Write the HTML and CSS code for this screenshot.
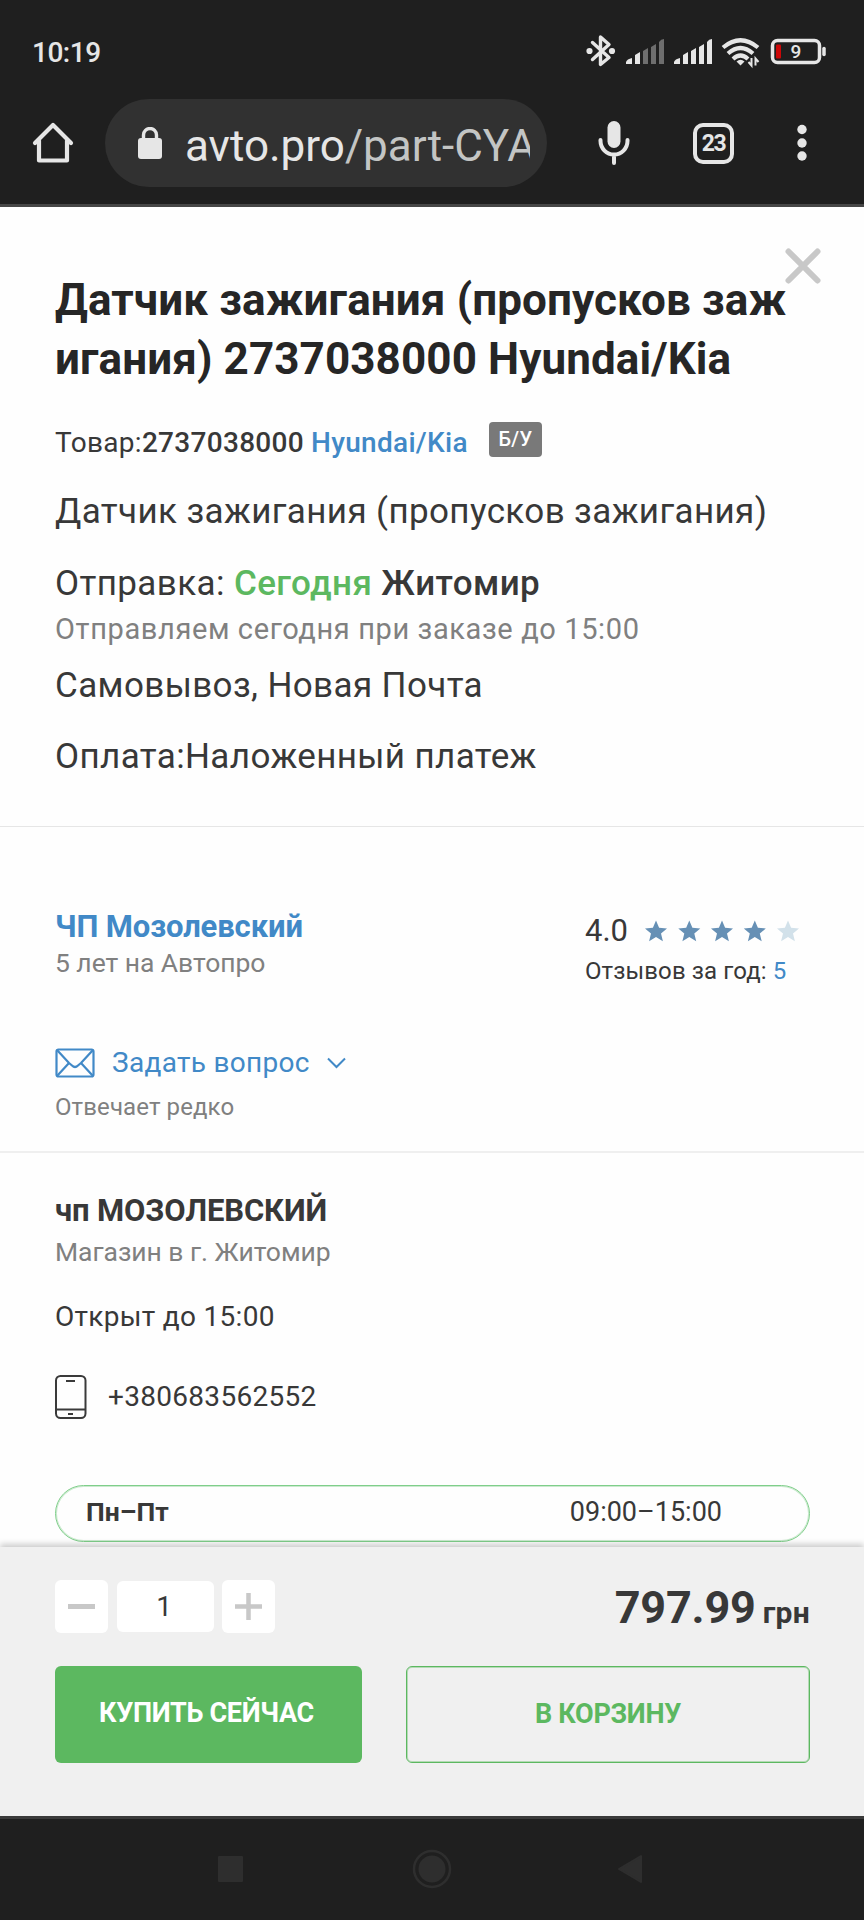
FILE: index.html
```html
<!DOCTYPE html>
<html lang="ru">
<head>
<meta charset="utf-8">
<title>Датчик зажигания 2737038000 Hyundai/Kia</title>
<link rel="stylesheet" href="styles.css">
</head>
<body>
<div class="screen">
  <header class="chrome">
    <div class="status">
      <span class="clock">10:19</span>
      <svg class="status-icons" viewBox="0 0 262 40" width="262" height="40">
        <g fill="none" stroke="#e6e6e6" stroke-width="3.400" stroke-linejoin="round" stroke-linecap="round">
          <path d="M10.500 12.500L27 27.500L18.500 34.500V7L27 14.500L10.500 29.500"/>
        </g>
        <g fill="#e6e6e6">
          <circle cx="7.500" cy="21" r="3.100"/><circle cx="30" cy="21" r="3.100"/>
          <path d="M44 34v-2q1-3 6-4v6zM53 34v-9l5-3v12z"/>
          <path d="M92 34v-2q1-3 6-4v6zM101 34v-9l5-3v12zM109 34v-13l5-3v16zM117 34v-17l5-3v20zM125 34v-22q2-3 5-3v25z"/>
        </g>
        <path fill="#6e6e6e" d="M61 34v-13l5-3v16zM69 34v-17l5-3v20zM77 34v-22q2-3 5-3v25z"/>
        <g fill="none" stroke="#e6e6e6" stroke-width="4.200">
          <path d="M141 17.500Q158.500 3 176 17.500"/>
          <path d="M146 23.500Q158.500 12.500 171 23.500"/>
          <path d="M151 29Q158.500 22 166 29"/>
        </g>
        <path fill="#e6e6e6" d="M154.500 31.500q4-3.500 8 0l-4 4z"/>
        <path fill="none" stroke="#e6e6e6" stroke-width="2" d="M169.500 28v7.500l-3-3.500M173.500 35.500v-7l3 3.500"/>
        <rect x="190.500" y="10.500" width="47" height="22" rx="5" fill="none" stroke="#e6e6e6" stroke-width="3.500"/>
        <rect x="194" y="14.500" width="5" height="14" rx="1" fill="#cc0808"/>
        <path d="M242 18.500v6" stroke="#e6e6e6" stroke-width="3.500" stroke-linecap="round"/>
        <text class="battery-text" x="214" y="28" text-anchor="middle">9</text>
      </svg>
    </div>
    <div class="toolbar">
      <svg class="home" viewBox="0 0 42 42" width="42" height="42" fill="none" stroke="#e6e6e6" stroke-width="4.200" stroke-linejoin="round" stroke-linecap="round">
        <path d="M3 21L21 3L39 21M7 18.500V38.500H35V18.500"/>
      </svg>
      <div class="omnibox">
        <svg viewBox="0 0 26 33" width="26" height="33">
          <rect x="1" y="11" width="24" height="21" rx="3" fill="#e6e6e6"/>
          <path d="M6.500 12V8a6.500 6.500 0 0 1 13 0V12" fill="none" stroke="#e6e6e6" stroke-width="3.400"/>
        </svg>
        <div class="url">avto.pro<span class="path">/part-CYA</span></div>
      </div>
      <svg class="mic" viewBox="0 0 32 46" width="32" height="46">
        <rect x="9.500" y="1" width="13" height="27" rx="6.500" fill="#e6e6e6"/>
        <path d="M2.500 20v1a13.500 13.500 0 0 0 27 0v-1M16 35v8" fill="none" stroke="#e6e6e6" stroke-width="4" stroke-linecap="round"/>
      </svg>
      <div class="tabs">23</div>
      <svg class="menu" viewBox="0 0 10 38" width="10" height="38" fill="#e6e6e6">
        <circle cx="5" cy="5.500" r="4.700"/><circle cx="5" cy="19" r="4.700"/><circle cx="5" cy="32" r="4.700"/>
      </svg>
    </div>
  </header>

  <main class="page">
    <section class="product">
      <svg class="close" viewBox="0 0 36 36" width="36" height="36" stroke="#c8c8c8" stroke-width="6" stroke-linecap="round">
        <path d="M3.500 3.500L32.500 32.500M32.500 3.500L3.500 32.500"/>
      </svg>
      <h1 class="title">Датчик зажигания (пропусков заж<br><span class="title-rest">игания) 2737038000 Hyundai/Kia</span></h1>
      <div class="sku">Товар:<b>2737038000</b> <b class="link">Hyundai/Kia</b><span class="badge">Б/У</span></div>
      <p class="line desc">Датчик зажигания (пропусков зажигания)</p>
      <p class="line ship">Отправка: <b class="today">Сегодня</b> <b>Житомир</b></p>
      <p class="note">Отправляем сегодня при заказе до 15:00</p>
      <p class="line delivery">Самовывоз, Новая Почта</p>
      <p class="line pay">Оплата:Наложенный платеж</p>
    </section>

    <section class="seller">
      <div class="seller-row">
        <div>
          <div class="name link">ЧП Мозолевский</div>
          <div class="sub">5 лет на Автопро</div>
        </div>
        <div class="rating">
          <div class="score">
            <span>4.0</span>
            <svg viewBox="0 0 156 22" width="156" height="22" fill="#6690b5">
              <defs><path id="star" d="M11 .500L14.100 7.800L22 8.400L16 13.500L17.900 21.300L11 17.100L4.100 21.300L6 13.500L0 8.400L7.900 7.800Z"/></defs>
              <use href="#star"/><use href="#star" x="33.300"/><use href="#star" x="66"/><use href="#star" x="98.800"/><use href="#star" x="132" fill="#d2e1ea"/>
            </svg>
          </div>
          <div class="reviews">Отзывов за год: <span class="link">5</span></div>
        </div>
      </div>
      <div class="ask link">
        <svg class="mail" viewBox="0 0 40 30" width="40" height="30" fill="none" stroke="#4189c7" stroke-width="2.200">
          <rect x="1.500" y="1.500" width="37" height="27" rx="2"/>
          <path d="M2 2L14 15L17 17.500Q20 20.500 23 17.500L26 15L38 2M2 28L14 15M38 28L26 15"/>
        </svg>
        <span>Задать вопрос</span>
        <svg class="chevron" viewBox="0 0 19 12" width="19" height="12" fill="none" stroke="#4189c7" stroke-width="2"><path d="M1 1.500L9.500 10L18 1.500"/></svg>
      </div>
      <div class="answers">Отвечает редко</div>
    </section>

    <section class="store">
      <div class="name">чп МОЗОЛЕВСКИЙ</div>
      <div class="sub place">Магазин в г. Житомир</div>
      <div class="open">Открыт до 15:00</div>
      <div class="phone">
        <svg viewBox="0 0 32 44" width="32" height="44" fill="none" stroke="#3a3a3a" stroke-width="2">
          <rect x="1" y="1" width="29.500" height="42" rx="4.500"/>
          <path d="M1 34.500H30.500M11 6h9M13 39h5"/>
        </svg>
        <span>+380683562552</span>
      </div>
      <div class="hours"><b>Пн–Пт</b><span>09:00–15:00</span></div>
    </section>
  </main>

  <footer class="buy-bar">
    <div class="buy-top">
      <div class="qty">
        <div class="step"><svg viewBox="0 0 27 27" width="27" height="27" stroke="#c8c8c8" stroke-width="5"><path d="M0 13.500H27"/></svg></div>
        <div class="count">1</div>
        <div class="step"><svg viewBox="0 0 27 27" width="27" height="27" stroke="#c8c8c8" stroke-width="4.500"><path d="M0 13.500H27M13.500 0V27"/></svg></div>
      </div>
      <div class="price">797.99<span class="cur">грн</span></div>
    </div>
    <div class="buttons">
      <div class="btn primary">КУПИТЬ СЕЙЧАС</div>
      <div class="btn outline">В КОРЗИНУ</div>
    </div>
  </footer>

  <nav class="sysnav">
    <span class="square"></span>
    <svg class="circle" viewBox="0 0 40 40" width="40" height="40"><circle cx="20" cy="20" r="13.500" fill="#2e2e2e"/><circle cx="20" cy="20" r="18" fill="none" stroke="#2e2e2e" stroke-width="2.500"/></svg>
    <svg class="back" viewBox="0 0 26 30" width="26" height="30"><path d="M2 15L24 2V28Z" fill="#2e2e2e" stroke="#2e2e2e" stroke-width="2" stroke-linejoin="round"/></svg>
  </nav>
</div>
</body>
</html>
```
FILE: styles.css
```css
* { box-sizing: border-box; }
body { margin: 0; background: #fefefe; }
h1, p { margin: 0; }
svg { display: block; flex: none; }
b { font-weight: 500; }

.screen {
  width: 864px;
  height: 1920px;
  display: flex;
  flex-direction: column;
  overflow: hidden;
  font-family: Roboto, "Noto Sans", sans-serif;
  color: #383838;
}

/* Browser chrome */
.chrome {
  flex: none;
  height: 207px;
  background: #1f1f1f;
  border-bottom: 3px solid #464646;
  color: #e6e6e6;
}
.status {
  height: 99px;
  padding: 30px 32px 0 32px;
  display: flex;
  justify-content: space-between;
  align-items: flex-start;
}
.clock { padding-top: 1px; font-size: 28px; line-height: 44px; font-weight: 500; letter-spacing: -.5px; }
.status-icons { margin-right: -12px; }
.battery-text { font: 500 19px Roboto, sans-serif; fill: #e6e6e6; }
.toolbar { display: flex; align-items: center; height: 88px; padding-left: 32px; }
.omnibox {
  display: flex;
  align-items: center;
  width: 442px;
  height: 88px;
  margin-left: 31px;
  padding-left: 32px;
  border-radius: 44px;
  background: #313131;
}
.url {
  width: 345px;
  margin-left: 22px;
  padding: 5px 0 0;
  overflow: hidden;
  white-space: nowrap;
  font-size: 44px;
  line-height: 56px;
}
.path { color: #c3c5c4; }
.mic { margin-left: 51px; }
.tabs {
  width: 41px;
  height: 41px;
  margin-left: 63px;
  border: 4px solid #e6e6e6;
  border-radius: 10px;
  font-size: 23px;
  font-weight: 700;
  line-height: 33px;
  text-align: center;
  letter-spacing: -1.5px;
}
.menu { margin-left: 63px; }

/* Page */
.page { flex: none; height: 1340px; background: #fefefe; }
.link { color: #4189c7; }

.product {
  position: relative;
  height: 620px;
  padding: 64px 0 0 55px;
  border-bottom: 1px solid #e6e6e6;
}
.close { position: absolute; left: 785px; top: 41px; }
.title { font-size: 44px; line-height: 59px; font-weight: 700; color: #262626; white-space: nowrap; letter-spacing: .12px; }
.title-rest { letter-spacing: .1px; }
.sku {
  display: flex;
  align-items: center;
  height: 36px;
  margin-top: 36px;
  font-size: 28px;
  line-height: 36px;
  letter-spacing: .3px;
}
.sku .link { margin-left: 7px; }
.badge {
  width: 53px;
  height: 35px;
  margin: -8px 0 0 21px;
  border-radius: 4px;
  background: #797979;
  color: #fff;
  font-size: 20px;
  font-weight: 500;
  line-height: 34px;
  text-align: center;
}
.line { font-size: 35px; line-height: 40px; letter-spacing: .38px; }
.desc { margin-top: 31px; }
.ship { margin-top: 32px; letter-spacing: .4px; }
.today { color: #5cb860; }
.note { margin-top: 8px; font-size: 29px; line-height: 34px; letter-spacing: .62px; color: #808080; }
.delivery { margin-top: 20px; }
.pay { margin-top: 31px; }

.seller {
  height: 326px;
  padding: 82px 0 0 55px;
  border-bottom: 2px solid #efefef;
}
.seller-row { display: flex; justify-content: space-between; height: 136px; }
.name { font-size: 31px; line-height: 36px; font-weight: 700; letter-spacing: -.12px; }
.sub { margin-top: 2px; font-size: 26.500px; line-height: 32px; letter-spacing: -.05px; color: #808080; }
.rating { width: 280px; padding: 4px 0 0 1px; }
.score { display: flex; align-items: center; gap: 17px; font-size: 31px; line-height: 36px; }
.reviews { margin-top: 8px; font-size: 24px; line-height: 28px; letter-spacing: .1px; }
.ask { display: flex; align-items: center; font-size: 28px; line-height: 36px; letter-spacing: .3px; }
.mail { margin-right: 17px; }
.chevron { margin-left: 17px; }
.answers { margin-top: 12px; font-size: 24px; line-height: 28px; letter-spacing: .1px; color: #808080; }

.store { padding: 40px 54px 0 55px; }
.place { margin-top: 7px; }
.open { margin-top: 31px; font-size: 28px; line-height: 36px; letter-spacing: .3px; }
.phone {
  display: flex;
  align-items: center;
  gap: 21px;
  margin-top: 40px;
  font-size: 28px;
  line-height: 44px;
  letter-spacing: .3px;
}
.hours {
  display: flex;
  align-items: center;
  justify-content: space-between;
  height: 57px;
  margin-top: 66px;
  padding: 0 87px 3px 30px;
  border: 1px solid #7fce8a;
  box-shadow: inset 0 0 0 1px rgba(127, 206, 138, .4);
  border-radius: 29px;
  font-size: 27px;
  line-height: 36px;
}
.hours b { font-weight: 700; font-size: 26.500px; }

/* Purchase bar */
.buy-bar {
  position: relative;
  flex: none;
  height: 269px;
  padding: 33px 54px 0 55px;
  background: #f0f0f0;
  box-shadow: 0 -3px 6px rgba(0, 0, 0, .2);
}
.buy-top { display: flex; justify-content: space-between; height: 86px; }
.qty { display: flex; align-items: flex-start; gap: 8.500px; }
.step, .count {
  display: flex;
  align-items: center;
  justify-content: center;
  width: 53px;
  height: 53px;
  border-radius: 6px;
  background: #fff;
}
.count { width: 97px; height: 51px; margin-top: 1px; padding-right: 2px; font-size: 28px; }
.price { padding-top: 1px; font-size: 45px; line-height: 54px; font-weight: 700; letter-spacing: -.2px; color: #383838; }
.cur { margin-left: 7px; font-size: 30px; letter-spacing: .3px; }
.buttons { display: flex; justify-content: space-between; }
.btn {
  width: 404px;
  height: 97px;
  border-radius: 6px;
  font-size: 27px;
  font-weight: 700;
  line-height: 95px;
  text-align: center;
  letter-spacing: -.3px;
}
.primary { width: 307px; padding-right: 4px; background: #5cb860; color: #fff; }
.outline { border: 1px solid #5cb860; box-shadow: inset 0 0 0 1px rgba(92, 184, 96, .4); color: #5cb860; }

/* System navigation */
.sysnav {
  flex: none;
  height: 104px;
  display: flex;
  align-items: center;
  padding: 0 0 2px 218px;
  background: #1f1f1f;
  border-top: 3px solid #3c3c3c;
}
.square { width: 25px; height: 26px; border-radius: 1px; background: #2e2e2e; }
.circle { margin-left: 169px; }
.back { margin-left: 165px; }
```
